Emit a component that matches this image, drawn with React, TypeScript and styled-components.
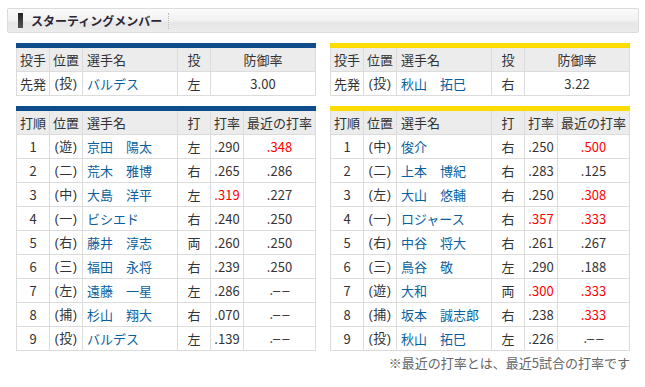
import React from "react";
import styled, { createGlobalStyle } from "styled-components";

const GlobalStyle = createGlobalStyle`
  body {
    margin: 0;
    background: #fff;
    font-family: "Noto Sans CJK JP", "Liberation Sans", sans-serif;
    color: #333;
  }
`;

const Page = styled.div`
  width: 645px;
  padding: 8px 6px 0 7px;
  box-sizing: border-box;
`;

const TitleBar = styled.div`
  display: flex;
  align-items: center;
  height: 25px;
  box-sizing: border-box;
  border: 1px solid #dcdcdc;
  border-radius: 2px;
  background: linear-gradient(#fbfbfb 0%, #f1f1f1 50%, #e6e6e6 60%, #ececec 100%);
  padding-left: 10px;
`;

const TitleMark = styled.span`
  width: 5px;
  height: 15px;
  background: linear-gradient(#222, #555);
  margin-right: 8px;
`;

const TitleText = styled.h2`
  margin: 0;
  font-size: 12px;
  font-weight: 700;
  color: #2d2434;
  line-height: 16px;
  padding-right: 6px;
  border-right: 1px dotted #bbb;
`;

const Columns = styled.div`
  display: flex;
  gap: 14px;
  margin: 10px 0 0 9px;
`;

const Column = styled.div`
  width: 300px;
  display: flex;
  flex-direction: column;
  gap: 10px;
`;

const Table = styled.table<{ $team: string }>`
  width: 300px;
  table-layout: fixed;
  border-collapse: collapse;
  border-top: 5px solid ${(p) => p.$team};
  font-size: 13px;
  line-height: 16px;
`;

const Th = styled.th<{ $left?: boolean }>`
  height: 23px;
  padding: 0 0 0 ${(p) => (p.$left ? "4px" : "0")};
  border: 1px solid #dcdcdc;
  background: #ececec;
  font-weight: 400;
  text-align: ${(p) => (p.$left ? "left" : "center")};
  white-space: nowrap;
  color: #333;
`;

const Td = styled.td<{ $left?: boolean; $hot?: boolean }>`
  height: 23px;
  padding: 0 0 0 ${(p) => (p.$left ? "4px" : "0")};
  border: 1px solid #dcdcdc;
  text-align: ${(p) => (p.$left ? "left" : "center")};
  white-space: nowrap;
  overflow: hidden;
  color: ${(p) => (p.$hot ? "#ff0000" : "#333")};
`;

const Pos = styled.span`
  letter-spacing: 0.5px;
  font-family: "Liberation Sans", "Noto Sans CJK JP", sans-serif;
  & > b {
    font-family: "Noto Sans CJK JP", sans-serif;
    font-weight: 400;
  }
`;

const Dash = styled.span`
  font-family: "Liberation Sans", sans-serif;
  letter-spacing: 2px;
  margin-right: -2px;
`;

const Name = styled.a`
  color: #0a5f9e;
  text-decoration: none;
`;

const Note = styled.p`
  margin: -6px 0 0;
  font-size: 13px;
  line-height: 16px;
  color: #666;
  text-align: right;
`;

type Pitcher = { name: string; hand: string; era: string };
type Batter = {
  pos: string;
  name: string;
  hand: string;
  avg: string;
  recent: string | null;
  hotAvg?: boolean;
  hotRecent?: boolean;
};

const teams: { color: string; pitcher: Pitcher; lineup: Batter[] }[] = [
  {
    color: "#0f4c8c",
    pitcher: { name: "バルデス", hand: "左", era: "3.00" },
    lineup: [
      { pos: "遊", name: "京田　陽太", hand: "左", avg: ".290", recent: ".348", hotRecent: true },
      { pos: "二", name: "荒木　雅博", hand: "右", avg: ".265", recent: ".286" },
      { pos: "中", name: "大島　洋平", hand: "左", avg: ".319", recent: ".227", hotAvg: true },
      { pos: "一", name: "ビシエド", hand: "右", avg: ".240", recent: ".250" },
      { pos: "右", name: "藤井　淳志", hand: "両", avg: ".260", recent: ".250" },
      { pos: "三", name: "福田　永将", hand: "右", avg: ".239", recent: ".250" },
      { pos: "左", name: "遠藤　一星", hand: "左", avg: ".286", recent: null },
      { pos: "捕", name: "杉山　翔大", hand: "右", avg: ".070", recent: null },
      { pos: "投", name: "バルデス", hand: "左", avg: ".139", recent: null },
    ],
  },
  {
    color: "#ffdc00",
    pitcher: { name: "秋山　拓巳", hand: "右", era: "3.22" },
    lineup: [
      { pos: "中", name: "俊介", hand: "右", avg: ".250", recent: ".500", hotRecent: true },
      { pos: "二", name: "上本　博紀", hand: "右", avg: ".283", recent: ".125" },
      { pos: "左", name: "大山　悠輔", hand: "右", avg: ".250", recent: ".308", hotRecent: true },
      { pos: "一", name: "ロジャース", hand: "右", avg: ".357", recent: ".333", hotAvg: true, hotRecent: true },
      { pos: "右", name: "中谷　将大", hand: "右", avg: ".261", recent: ".267" },
      { pos: "三", name: "鳥谷　敬", hand: "左", avg: ".290", recent: ".188" },
      { pos: "遊", name: "大和", hand: "両", avg: ".300", recent: ".333", hotAvg: true, hotRecent: true },
      { pos: "捕", name: "坂本　誠志郎", hand: "右", avg: ".238", recent: ".333", hotRecent: true },
      { pos: "投", name: "秋山　拓巳", hand: "左", avg: ".226", recent: null },
    ],
  },
];

const Position: React.FC<{ pos: string }> = ({ pos }) => (
  <Pos>
    (<b>{pos}</b>)
  </Pos>
);

const PitcherTable: React.FC<{ color: string; p: Pitcher }> = ({ color, p }) => (
  <Table $team={color}>
    <colgroup>
      <col style={{ width: 33 }} />
      <col style={{ width: 33 }} />
      <col style={{ width: 95 }} />
      <col style={{ width: 33 }} />
      <col />
    </colgroup>
    <thead>
      <tr>
        <Th>投手</Th>
        <Th>位置</Th>
        <Th $left>選手名</Th>
        <Th>投</Th>
        <Th>防御率</Th>
      </tr>
    </thead>
    <tbody>
      <tr>
        <Td>先発</Td>
        <Td>
          <Position pos="投" />
        </Td>
        <Td $left>
          <Name href="#">{p.name}</Name>
        </Td>
        <Td>{p.hand}</Td>
        <Td>{p.era}</Td>
      </tr>
    </tbody>
  </Table>
);

const LineupTable: React.FC<{ color: string; rows: Batter[] }> = ({ color, rows }) => (
  <Table $team={color}>
    <colgroup>
      <col style={{ width: 33 }} />
      <col style={{ width: 33 }} />
      <col style={{ width: 95 }} />
      <col style={{ width: 33 }} />
      <col style={{ width: 33 }} />
      <col />
    </colgroup>
    <thead>
      <tr>
        <Th>打順</Th>
        <Th>位置</Th>
        <Th $left>選手名</Th>
        <Th>打</Th>
        <Th>打率</Th>
        <Th>最近の打率</Th>
      </tr>
    </thead>
    <tbody>
      {rows.map((b, i) => (
        <tr key={i}>
          <Td>{i + 1}</Td>
          <Td>
            <Position pos={b.pos} />
          </Td>
          <Td $left>
            <Name href="#">{b.name}</Name>
          </Td>
          <Td>{b.hand}</Td>
          <Td $hot={b.hotAvg}>{b.avg}</Td>
          <Td $hot={b.hotRecent}>
            {b.recent ?? (
              <>
                .<Dash>––</Dash>
              </>
            )}
          </Td>
        </tr>
      ))}
    </tbody>
  </Table>
);

const App: React.FC = () => (
  <Page>
    <GlobalStyle />
    <TitleBar>
      <TitleMark />
      <TitleText>スターティングメンバー</TitleText>
    </TitleBar>
    <Columns>
      {teams.map((t, i) => (
        <Column key={i}>
          <PitcherTable color={t.color} p={t.pitcher} />
          <LineupTable color={t.color} rows={t.lineup} />
          {i === 1 && <Note>※最近の打率とは、最近5試合の打率です</Note>}
        </Column>
      ))}
    </Columns>
  </Page>
);

export default App;
